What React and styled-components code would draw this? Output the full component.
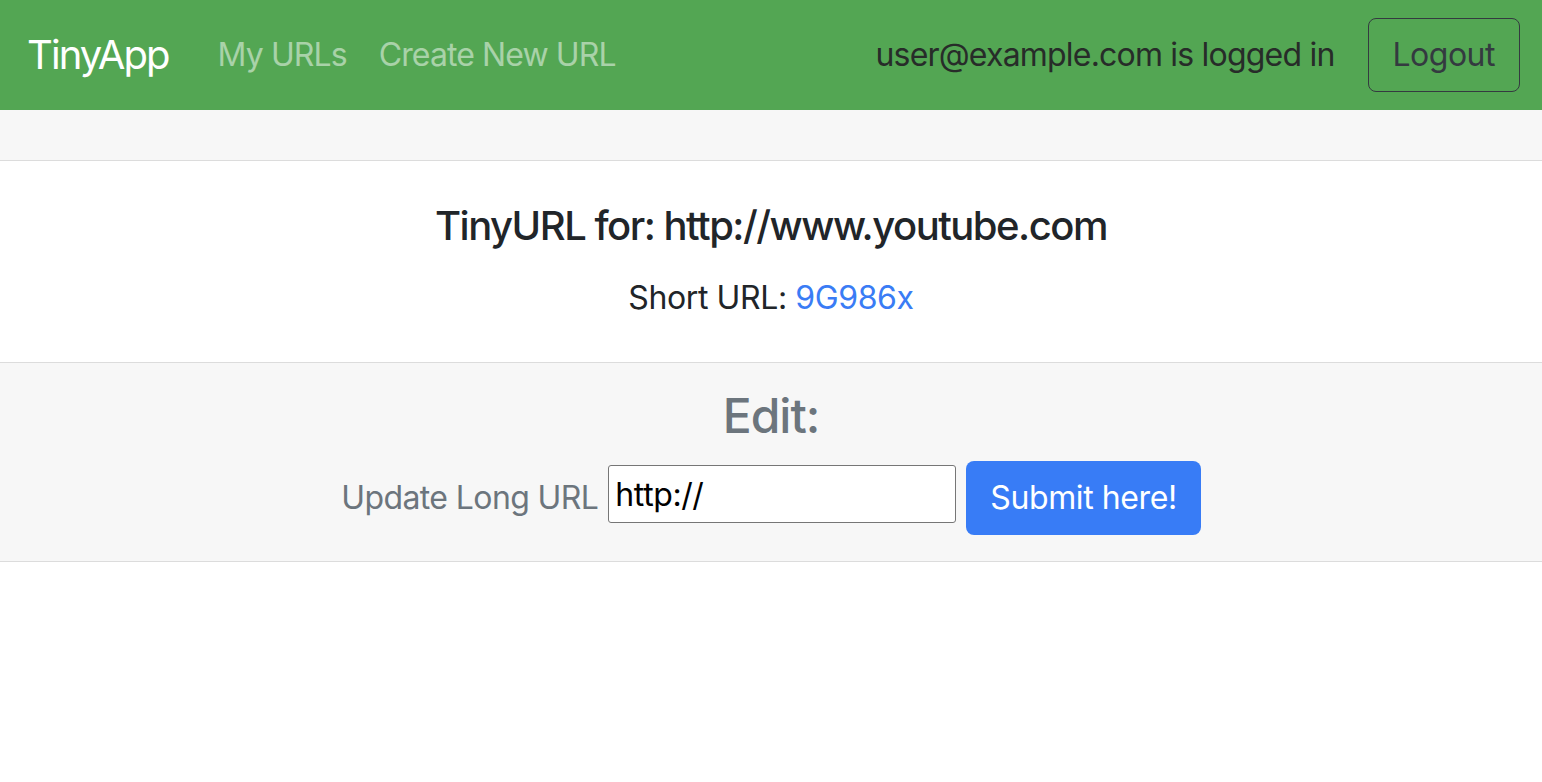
import React from 'react';
import styled, { createGlobalStyle } from 'styled-components';

const GlobalStyle = createGlobalStyle`
  body {
    margin: 0;
    background: #fff;
    font-family: Inter, "Noto Sans", "Liberation Sans", sans-serif;
    font-size: 32px;
    line-height: 1.5;
    color: #212529;
  }
  * { box-sizing: border-box; }
`;

const NavBar = styled.nav`
  display: flex;
  align-items: center;
  height: 110px;
  padding: 0 22px 0 27px;
  background: #53a653;
`;

const Brand = styled.a`
  font-size: 40px;
  color: #fff;
  text-decoration: none;
  margin-right: 33px;
  letter-spacing: -1.9px;
`;

const NavLink = styled.a`
  font-size: 32px;
  color: rgba(255, 255, 255, 0.5);
  padding: 0 16px;
  text-decoration: none;
  letter-spacing: -0.9px;
`;

const Spacer = styled.div`
  flex: 1;
`;

const NavText = styled.span`
  color: #272c29;
  margin-right: 33px;
  letter-spacing: -0.8px;
`;

const OutlineButton = styled.button`
  font: inherit;
  height: 74px;
  padding: 0 24px;
  border: 1.5px solid #343a40;
  border-radius: 8px;
  background: transparent;
  color: #343a40;
  letter-spacing: -0.5px;
`;

const Card = styled.section`
  display: flex;
  flex-direction: column;
  border-bottom: 1px solid #dcdcdc;
`;

const CardHeader = styled.div`
  height: 51px;
  background: #f7f7f7;
  border-bottom: 1px solid #dcdcdc;
`;

const CardBody = styled.div`
  padding: 41px 40px 40px;
  text-align: center;
  background: #fff;
`;

const Title = styled.h5`
  margin: 0 0 24px;
  font-size: 40px;
  font-weight: 500;
  line-height: 1.2;
  letter-spacing: -1.5px;
`;

const CardText = styled.p`
  margin: 0;
  letter-spacing: -0.4px;
`;

const ShortLink = styled.a`
  color: #3a7cf5;
  text-decoration: none;
`;

const CardFooter = styled.div`
  padding: 24px 40px 26px;
  background: #f7f7f7;
  border-top: 1px solid #dcdcdc;
  text-align: center;
  color: #6c757d;
`;

const EditHeading = styled.h4`
  margin: 0 0 16px;
  font-size: 48px;
  font-weight: 500;
  line-height: 1.2;
  letter-spacing: -1px;
`;

const Form = styled.form`
  display: flex;
  justify-content: center;
  align-items: baseline;
  gap: 10px;
`;

const Label = styled.label`
  color: #6c757d;
  letter-spacing: -0.6px;
`;

const Input = styled.input`
  width: 348px;
  height: 58px;
  padding: 0 6px;
  font-family: Inter, "Noto Sans", "Liberation Sans", sans-serif;
  font-size: 32px;
  letter-spacing: -0.4px;
  color: #000;
  border: 1px solid #767676;
  border-radius: 3px;
  background: #fff;
  outline: none;
  position: relative;
  top: -3px;
`;

const PrimaryButton = styled.button`
  font: inherit;
  height: 74px;
  padding: 0 24px;
  border: none;
  border-radius: 8px;
  background: #387cf6;
  color: #fff;
  letter-spacing: -0.4px;
`;

export default function App() {
  return (
    <>
      <GlobalStyle />
      <NavBar>
        <Brand href="#">TinyApp</Brand>
        <NavLink href="#">My URLs</NavLink>
        <NavLink href="#">Create New URL</NavLink>
        <Spacer />
        <NavText>user@example.com is logged in</NavText>
        <OutlineButton>Logout</OutlineButton>
      </NavBar>
      <Card>
        <CardHeader />
        <CardBody>
          <Title>TinyURL for: http://www.youtube.com</Title>
          <CardText>
            Short URL: <ShortLink href="#">9G986x</ShortLink>
          </CardText>
        </CardBody>
        <CardFooter>
          <EditHeading>Edit:</EditHeading>
          <Form onSubmit={(e) => e.preventDefault()}>
            <Label htmlFor="longURL">Update Long URL</Label>
            <Input id="longURL" type="text" defaultValue="http://" />
            <PrimaryButton type="submit">Submit here!</PrimaryButton>
          </Form>
        </CardFooter>
      </Card>
    </>
  );
}
